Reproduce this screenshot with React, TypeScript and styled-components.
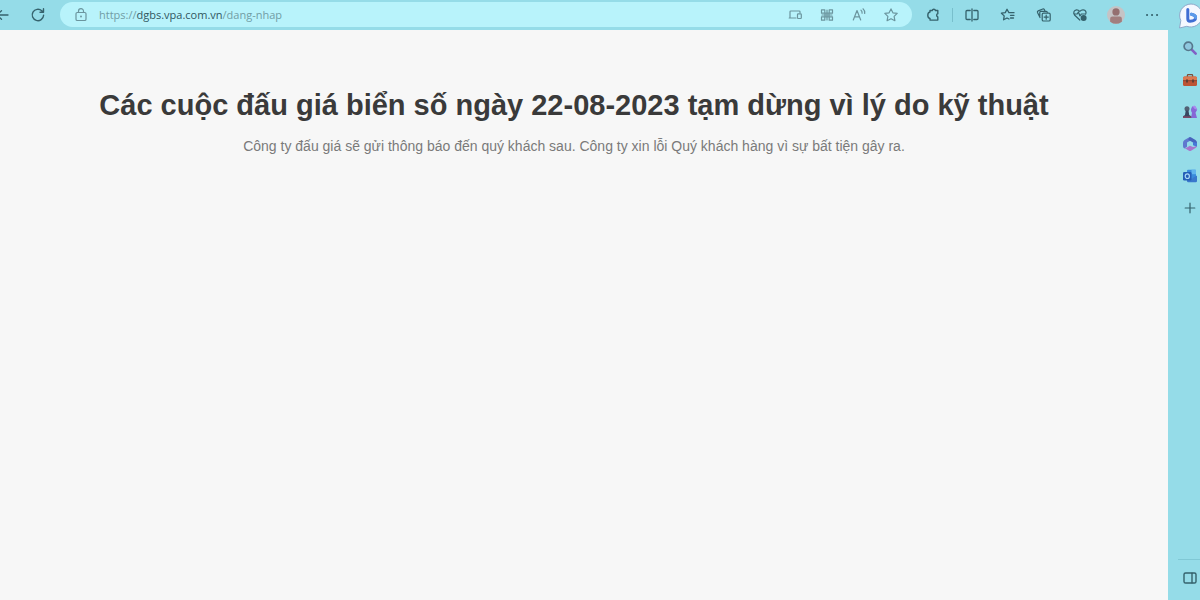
import React from "react";
import styled, { createGlobalStyle } from "styled-components";

const GlobalStyle = createGlobalStyle`
  * { box-sizing: border-box; }
  body { margin: 0; background: #f7f7f7; }
`;

const Window = styled.div`
  display: flex;
  min-height: 100vh;
  overflow: hidden;
  font-family: "Open Sans", "Liberation Sans", sans-serif;
`;

const MainColumn = styled.div`
  flex: 1;
  min-width: 0;
  display: flex;
  flex-direction: column;
`;

const Toolbar = styled.header`
  display: flex;
  align-items: center;
  height: 30px;
  padding: 0 4px 1px 0;
  background: #95dce8;
  overflow: hidden;
`;

const IconButton = styled.button<{ $tone?: string; $width?: number }>`
  display: flex;
  align-items: center;
  justify-content: center;
  flex: none;
  width: ${(p) => p.$width ?? 24}px;
  height: 24px;
  padding: 0;
  border: 0;
  background: none;
  color: ${(p) => p.$tone ?? "#35626c"};
`;

const Navigation = styled.nav`
  display: flex;
  gap: 14px;
  flex: none;
  width: 60px;
`;

const AddressBar = styled.div`
  flex: 1;
  min-width: 0;
  display: flex;
  align-items: center;
  height: 25px;
  padding: 0 5px 0 9px;
  border-radius: 13px;
  background: #b8f3fb;
`;

const Address = styled.a`
  flex: 1;
  min-width: 0;
  margin-left: 6px;
  overflow: hidden;
  white-space: nowrap;
  font-size: 11px;
  line-height: 16px;
  color: #719da5;
  text-decoration: none;
`;

const Host = styled.span`
  color: #30565f;
`;

const Actions = styled.div`
  display: flex;
  align-items: center;
  gap: 12px;
`;

const Extensions = styled.div`
  display: flex;
  align-items: center;
  gap: 7px;
  padding: 0 7px 0 9px;
`;

const Divider = styled.span`
  width: 1px;
  height: 14px;
  background: #78bfcc;
`;

const Page = styled.main`
  flex: 1;
  padding: 57px 20px 20px;
  background: #f7f7f7;
  font-family: "Liberation Sans", Arial, sans-serif;
  text-align: center;
`;

const PageBody = styled.section`
  padding-right: 20px;
`;

const Title = styled.h1`
  margin: 0;
  font-size: 29px;
  line-height: 36px;
  font-weight: 700;
  color: #3a3a3a;
`;

const Message = styled.p`
  margin: 13px 0 0;
  font-size: 14px;
  line-height: 20px;
  color: #7a7a7a;
`;

const Sidebar = styled.aside`
  flex: none;
  display: flex;
  flex-direction: column;
  justify-content: space-between;
  width: 32px;
  background: #95dce8;
  overflow: hidden;
`;

const SidebarGroup = styled.div`
  display: flex;
  flex-direction: column;
  gap: 8px;
  padding: 4px 0 0 10px;
`;

const SidebarFooter = styled.div`
  margin-left: 10px;
  padding: 6px 0 10px;
  border-top: 1px solid #80c8d5;
`;

type DrawingProps = { size?: number; children: React.ReactNode };

const Glyph = ({ size = 16, children }: DrawingProps) => (
  <svg
    width={size}
    height={size}
    viewBox="0 0 16 16"
    fill="none"
    stroke="currentColor"
    strokeWidth="1.2"
    strokeLinecap="round"
    strokeLinejoin="round"
    aria-hidden="true"
  >
    {children}
  </svg>
);

const Drawing = ({ size = 16, children }: DrawingProps) => (
  <svg width={size} height={size} viewBox="0 0 16 16" fill="none" aria-hidden="true">
    {children}
  </svg>
);

const muted = "#6b959e";

export default function App() {
  return (
    <>
      <GlobalStyle />
      <Window>
        <MainColumn>
          <Toolbar>
            <Navigation>
              <IconButton $width={12} aria-label="Back">
                <svg width="12" height="14" viewBox="0 0 12 14" fill="none" stroke="currentColor" strokeWidth="1.3" strokeLinecap="round" aria-hidden="true">
                  <path d="M-3 7H8M-3 7L1.5 2.8M-3 7L1.5 11.2" />
                </svg>
              </IconButton>
              <IconButton aria-label="Refresh">
                <Glyph>
                  <path d="M13.6 8.3A5.7 5.7 0 1 1 11.8 3.8L13.4 5.3M13.5 1.8V5.3H10" strokeWidth="1.4" />
                </Glyph>
              </IconButton>
            </Navigation>

            <AddressBar>
              <IconButton $tone={muted} aria-label="Site information">
                <Glyph>
                  <rect x="3" y="5.5" width="10" height="8" rx="1.3" />
                  <path d="M5.5 5.3V4.2a2.5 2.5 0 0 1 5 0v1.1" />
                  <circle cx="8" cy="9.5" r=".4" fill="currentColor" />
                </Glyph>
              </IconButton>
              <Address href="https://dgbs.vpa.com.vn/dang-nhap">
                https://<Host>dgbs.vpa.com.vn</Host>/dang-nhap
              </Address>
              <IconButton $tone={muted} $width={32} aria-label="Send to device">
                <Glyph>
                  <path d="M9 11H2.2M3 10.8V4.8q0-.8.8-.8h8.4q.8 0 .8.8v1" />
                  <rect x="10.5" y="6.8" width="3.8" height="4.7" rx=".7" />
                </Glyph>
              </IconButton>
              <IconButton $tone={muted} $width={32} aria-label="Apps">
                <Glyph>
                  <path d="M2.5 2.8h3.3v3.4H2.5zM10.2 2.8h3.3v3.4h-3.3zM2.5 9.8h3.3v3.4H2.5zM10.2 9.8h3.3v3.4h-3.3zM6 6.2h4v3.6H6zM3 8h10M8 3v10" />
                </Glyph>
              </IconButton>
              <IconButton $tone={muted} $width={32} aria-label="Read aloud">
                <Glyph>
                  <path d="M2.3 13L6 3.5L9.7 13M3.6 9.8h4.8M10 3.2q1.3 1 1.1 3M12 1.8q2 1.8 1.7 4.7" />
                </Glyph>
              </IconButton>
              <IconButton $tone={muted} $width={32} aria-label="Add to favorites">
                <Glyph>
                  <path d="M8 1.9l1.9 3.9 4.3.6-3.1 3 .8 4.3L8 11.7l-3.9 2 .8-4.3-3.1-3 4.3-.6z" />
                </Glyph>
              </IconButton>
            </AddressBar>

            <Extensions>
              <IconButton aria-label="Extensions">
                <Glyph>
                  <path d="M5 3.5h2.2a1.7 1.7 0 0 1 3.3 0h2.3v3.2a1.7 1.7 0 0 0 0 3.2v3.2H5V11.5Q2.8 11 2.8 8.2T5 5z" strokeWidth="1.4" />
                </Glyph>
              </IconButton>
              <Divider />
            </Extensions>

            <Actions>
              <IconButton aria-label="Split screen">
                <Glyph>
                  <path d="M6.2 3.5H3q-1 0-1 1v7q0 1 1 1h3.2M9.8 3.5H13q1 0 1 1v7q0 1-1 1H9.8M8 2v12" strokeWidth="1.3" />
                </Glyph>
              </IconButton>
              <IconButton aria-label="Favorites">
                <Glyph>
                  <path d="M9 5.7h5M10.5 8.3h3.5M10.5 11h3M8.8 5.5L7 2.2 5.3 5.6l-3.9.6 2.8 2.7-.6 3.9L7 11l2 1" strokeWidth="1.3" />
                </Glyph>
              </IconButton>
              <IconButton aria-label="Collections">
                <Glyph>
                  <path d="M4 10.5L1.5 5.5Q1.1 4.4 2.2 3.9L6.8 2q1-.4 1.5.5l.5 1M3.8 9.5V5.3q0-1 1-1h5.5q1 0 1 1" />
                  <rect x="6.2" y="6.2" width="8" height="7.8" rx="1.3" />
                  <path d="M10.2 8v4.2M8.1 10.1h4.2" />
                </Glyph>
              </IconButton>
              <IconButton aria-label="Browser essentials">
                <Glyph>
                  <path d="M7.8 13L2.5 8C.9 5.8 2 3 4.5 2.8q1.8-.1 3.3 1.5Q9.3 2.7 11.2 2.8C13.7 3 14.7 5.3 13.6 7.2M2.5 7h2.7l1.2-2 1.6 4L9.3 7h3.5" />
                  <circle cx="11.6" cy="11" r="3" fill="currentColor" stroke="none" />
                </Glyph>
              </IconButton>
              <IconButton aria-label="Profile">
                <Drawing size={20}>
                  <circle cx="8" cy="8" r="7.2" fill="#c5c3c5" />
                  <circle cx="8" cy="5.5" r="2.9" fill="#946f70" />
                  <path d="M3.3 13.3V11q0-1.8 1.8-1.8h5.8q1.8 0 1.8 1.8v2.3Q8 16.8 3.3 13.3z" fill="#a17e7e" />
                </Drawing>
              </IconButton>
              <IconButton aria-label="Settings and more">
                <Glyph>
                  <path d="M3 8h.1M8 8h.1M13 8h.1" strokeWidth="2" />
                </Glyph>
              </IconButton>
            </Actions>
          </Toolbar>

          <Page>
            <PageBody>
              <Title>Các cuộc đấu giá biển số ngày 22-08-2023 tạm dừng vì lý do kỹ thuật</Title>
              <Message>
                Công ty đấu giá sẽ gửi thông báo đến quý khách sau. Công ty xin lỗi Quý khách hàng vì sự bất tiện gây ra.
              </Message>
            </PageBody>
          </Page>
        </MainColumn>

        <Sidebar>
          <SidebarGroup>
            <IconButton aria-label="Bing chat">
              <svg width="24" height="26" viewBox="0 0 24 26" aria-hidden="true">
                <path d="M13 1a11.5 11.5 0 1 1-4.2 22.3L1.5 25 2.8 17.6A11.5 11.5 0 0 1 13 1z" fill="#f4f8ff" stroke="#8fa9ca" />
                <path d="M9.8 6.5v9.3q0 2.4 2.2 2.4 5.6-.2 5.6-3.8 0-2.4-4.2-3.2" fill="none" stroke="#3f6ed3" strokeWidth="3" strokeLinecap="round" strokeLinejoin="round" />
                <path d="M13.4 11.2q4.2.8 4.2 3.2" fill="none" stroke="#5b9bea" strokeWidth="3" strokeLinecap="round" />
              </svg>
            </IconButton>
            <IconButton aria-label="Search">
              <Drawing>
                <path d="M9.7 9.7l4 4" stroke="#8160c5" strokeWidth="2.6" strokeLinecap="round" />
                <circle cx="6.3" cy="6.3" r="4.2" fill="#8fc8df" stroke="#56788c" strokeWidth="1.7" />
              </Drawing>
            </IconButton>
            <IconButton aria-label="Shopping">
              <Drawing>
                <path d="M5.4 5V3.5q0-.8.8-.8h3.6q.8 0 .8.8V5" stroke="#794f3c" strokeWidth="1.3" />
                <rect x="1" y="4.5" width="14" height="9.5" rx="1.5" fill="#bc5435" />
                <path d="M1 6q0-1.5 1.5-1.5h11Q15 4.5 15 6v2.7H1z" fill="#db7951" />
                <path d="M1 8.7h14" stroke="#8a4130" />
                <rect x="4" y="7.5" width="2" height="3" fill="#633d33" />
                <rect x="10" y="7.5" width="2" height="3" fill="#633d33" />
              </Drawing>
            </IconButton>
            <IconButton aria-label="Games">
              <Drawing>
                <path d="M9 14l1-5.2Q7.7 5.5 10.5 2.2l3 .2 1.7 3.3-1.7 3L15 14z" fill="#8668d6" />
                <path d="M10.5 2.2l2.1-.7 1.6 2 1 2.2-2.5-.6z" fill="#ab8aef" />
                <circle cx="5" cy="4.8" r="2.5" fill="#526074" />
                <path d="M3.7 6.5h2.8l.7 4.5 2 1.2V14H1v-1.8L3 11z" fill="#384860" />
                <path d="M1 12.3h8.2V14H1z" fill="#7c4966" />
              </Drawing>
            </IconButton>
            <IconButton aria-label="Microsoft 365">
              <Drawing>
                <path d="M7.3 1.2L2.5 4Q1 5 1 6.8v3.5q0 1.4 1.3 2.1L5 10.7V6.5l4-2.3z" fill="#6078cf" />
                <path d="M7.3 1.2q.7-.5 1.5 0L13.5 4Q15 5 15 6.8v3.5l-4-1.6V6.4L6.2 3.8z" fill="#4864bd" />
                <path d="M15 9.2q0 1.9-1.5 2.8l-4.5 2.7q-1 .6-2 0L2.5 12q1.7.3 3.2-.9l2.3-1.4 3 1.3q2 .1 4-1.8z" fill="#a974cc" />
                <path d="M11 6l4 1v3.4l-4-1.2z" fill="#4678d8" />
              </Drawing>
            </IconButton>
            <IconButton aria-label="Outlook">
              <Drawing>
                <rect x="5" y="1.7" width="9" height="9" rx="1" fill="#3a8bdb" />
                <path d="M9.5 1.7H14v4.5H9.5z" fill="#62b5ed" />
                <path d="M5 8l5 2.5L15 7.5V13q0 1.3-1.3 1.3H6.3Q5 14.3 5 13z" fill="#3978cc" />
                <rect x="1" y="4" width="8.5" height="8.5" rx="1.2" fill="#245eb7" />
                <ellipse cx="5.3" cy="8.2" rx="2.1" ry="2.3" stroke="#a9d6f5" strokeWidth="1.2" />
              </Drawing>
            </IconButton>
            <IconButton aria-label="Customize sidebar">
              <Glyph>
                <path d="M8 3.2v9.6M3.2 8h9.6" />
              </Glyph>
            </IconButton>
          </SidebarGroup>
          <SidebarFooter>
            <IconButton aria-label="Toggle sidebar">
              <Glyph>
                <rect x="2" y="3" width="12" height="10" rx="1.6" strokeWidth="1.4" />
                <path d="M10 3.3v9.4" strokeWidth="1.4" />
              </Glyph>
            </IconButton>
          </SidebarFooter>
        </Sidebar>
      </Window>
    </>
  );
}
